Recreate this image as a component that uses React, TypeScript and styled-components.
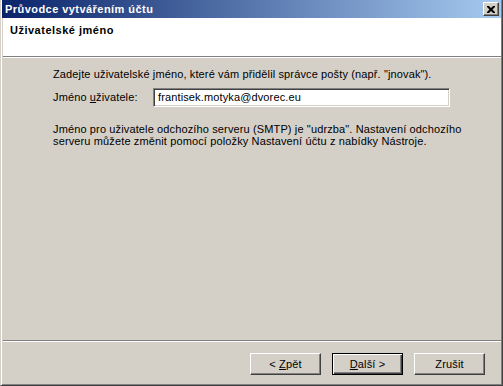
import React from "react";
import styled, { createGlobalStyle } from "styled-components";

const Global = createGlobalStyle`
  html, body { margin: 0; padding: 0; background: #d4d0c8; }
  body { font-family: "Liberation Sans", Arial, sans-serif; font-size: 11px; color: #000; letter-spacing: 0.13px; }
  * { box-sizing: border-box; }
`;

const Window = styled.div`
  width: 503px;
  height: 386px;
  display: flex;
  flex-direction: column;
  background: #d4d0c8;
  border-left: 1px solid #d4d0c8;
  border-right: 1px solid #404040;
  border-bottom: 1px solid #404040;
  box-shadow: inset 1px 0 0 #ffffff, inset -1px -1px 0 #808080;
  padding: 0 2px 2px 2px;
`;

const TitleBar = styled.div`
  height: 18px;
  flex: none;
  display: flex;
  align-items: center;
  justify-content: space-between;
  padding: 0 2px 0 3px;
  background: linear-gradient(to right, #0a246a, #a6caf0);
  margin: 0 -1px;
`;

const TitleText = styled.span`
  color: #fff;
  font-weight: bold;
  font-size: 11px;
  letter-spacing: 0.45px;
`;

const CloseButton = styled.div`
  width: 16px;
  height: 14px;
  background: #d4d0c8;
  border-top: 1px solid #fff;
  border-left: 1px solid #fff;
  border-right: 1px solid #404040;
  border-bottom: 1px solid #404040;
  box-shadow: inset -1px -1px 0 #808080;
  display: flex;
  align-items: center;
  justify-content: center;
`;

const Header = styled.div`
  height: 39px;
  flex: none;
  background: #fff;
  border-bottom: 1px solid #808080;
  box-shadow: 0 1px 0 #ffffff;
  padding: 6px 7px;
  margin-right: -1px;
`;

const HeaderTitle = styled.div`
  font-weight: bold;
  font-size: 11px;
  line-height: 13px;
  letter-spacing: 0.5px;
`;

const Body = styled.div`
  flex: 1;
  padding: 11px 0 0 50px;
  display: flex;
  flex-direction: column;
`;

const Para = styled.p<{ $top?: number }>`
  margin: ${(p) => p.$top ?? 0}px 0 0 0;
  line-height: 12.5px;
`;

const FormRow = styled.div`
  display: flex;
  align-items: center;
  margin-top: 7px;
`;

const Label = styled.label`
  width: 100px;
  flex: none;
`;

const Input = styled.div`
  width: 297px;
  height: 19px;
  background: #fff;
  border-top: 1px solid #808080;
  border-left: 1px solid #808080;
  border-right: 1px solid #ffffff;
  border-bottom: 1px solid #ffffff;
  box-shadow: inset 1px 1px 0 #404040, inset -1px -1px 0 #d4d0c8;
  display: flex;
  align-items: center;
  padding-left: 4px;
`;

const Separator = styled.div`
  height: 2px;
  flex: none;
  border-top: 1px solid #808080;
  border-bottom: 1px solid #ffffff;
  margin-right: -1px;
`;

const Footer = styled.div`
  height: 41px;
  flex: none;
  display: flex;
  justify-content: flex-end;
  align-items: flex-start;
  padding: 11px 15px 0 0;
  gap: 11px;
`;

const Button = styled.div<{ $default?: boolean }>`
  width: 71px;
  height: 22px;
  display: flex;
  align-items: center;
  justify-content: center;
  background: #d4d0c8;
  ${(p) =>
    p.$default
      ? `border: 1px solid #000;
         box-shadow: inset 1px 1px 0 #fff, inset -1px -1px 0 #404040, inset -2px -2px 0 #808080;`
      : `border-top: 1px solid #fff;
         border-left: 1px solid #fff;
         border-right: 1px solid #404040;
         border-bottom: 1px solid #404040;
         box-shadow: inset -1px -1px 0 #808080;`}
`;

const Key = styled.span`
  text-decoration: underline;
`;

export default function App() {
  return (
    <>
      <Global />
      <Window>
        <TitleBar>
          <TitleText>Průvodce vytvářením účtu</TitleText>
          <CloseButton>
            <svg width="8" height="7" viewBox="0 0 8 7">
              <path d="M0 0h2l2 2 2-2h2v1l-2.5 2.5L8 6v1H6L4 5 2 7H0V6l2.5-2.5L0 1z" fill="#000" />
            </svg>
          </CloseButton>
        </TitleBar>
        <Header>
          <HeaderTitle>Uživatelské jméno</HeaderTitle>
        </Header>
        <Body>
          <Para>Zadejte uživatelské jméno, které vám přidělil správce pošty (např. "jnovak").</Para>
          <FormRow>
            <Label>
              Jméno <Key>u</Key>živatele:
            </Label>
            <Input>frantisek.motyka@dvorec.eu</Input>
          </FormRow>
          <Para $top={16}>
            Jméno pro uživatele odchozího serveru (SMTP) je "udrzba". Nastavení odchozího
            <br />
            serveru můžete změnit pomocí položky Nastavení účtu z nabídky Nástroje.
          </Para>
        </Body>
        <Separator />
        <Footer>
          <Button>
            &lt;&nbsp;<Key>Z</Key>pět
          </Button>
          <Button $default>
            <Key>D</Key>alší&nbsp;&gt;
          </Button>
          <Button>Zrušit</Button>
        </Footer>
      </Window>
    </>
  );
}
